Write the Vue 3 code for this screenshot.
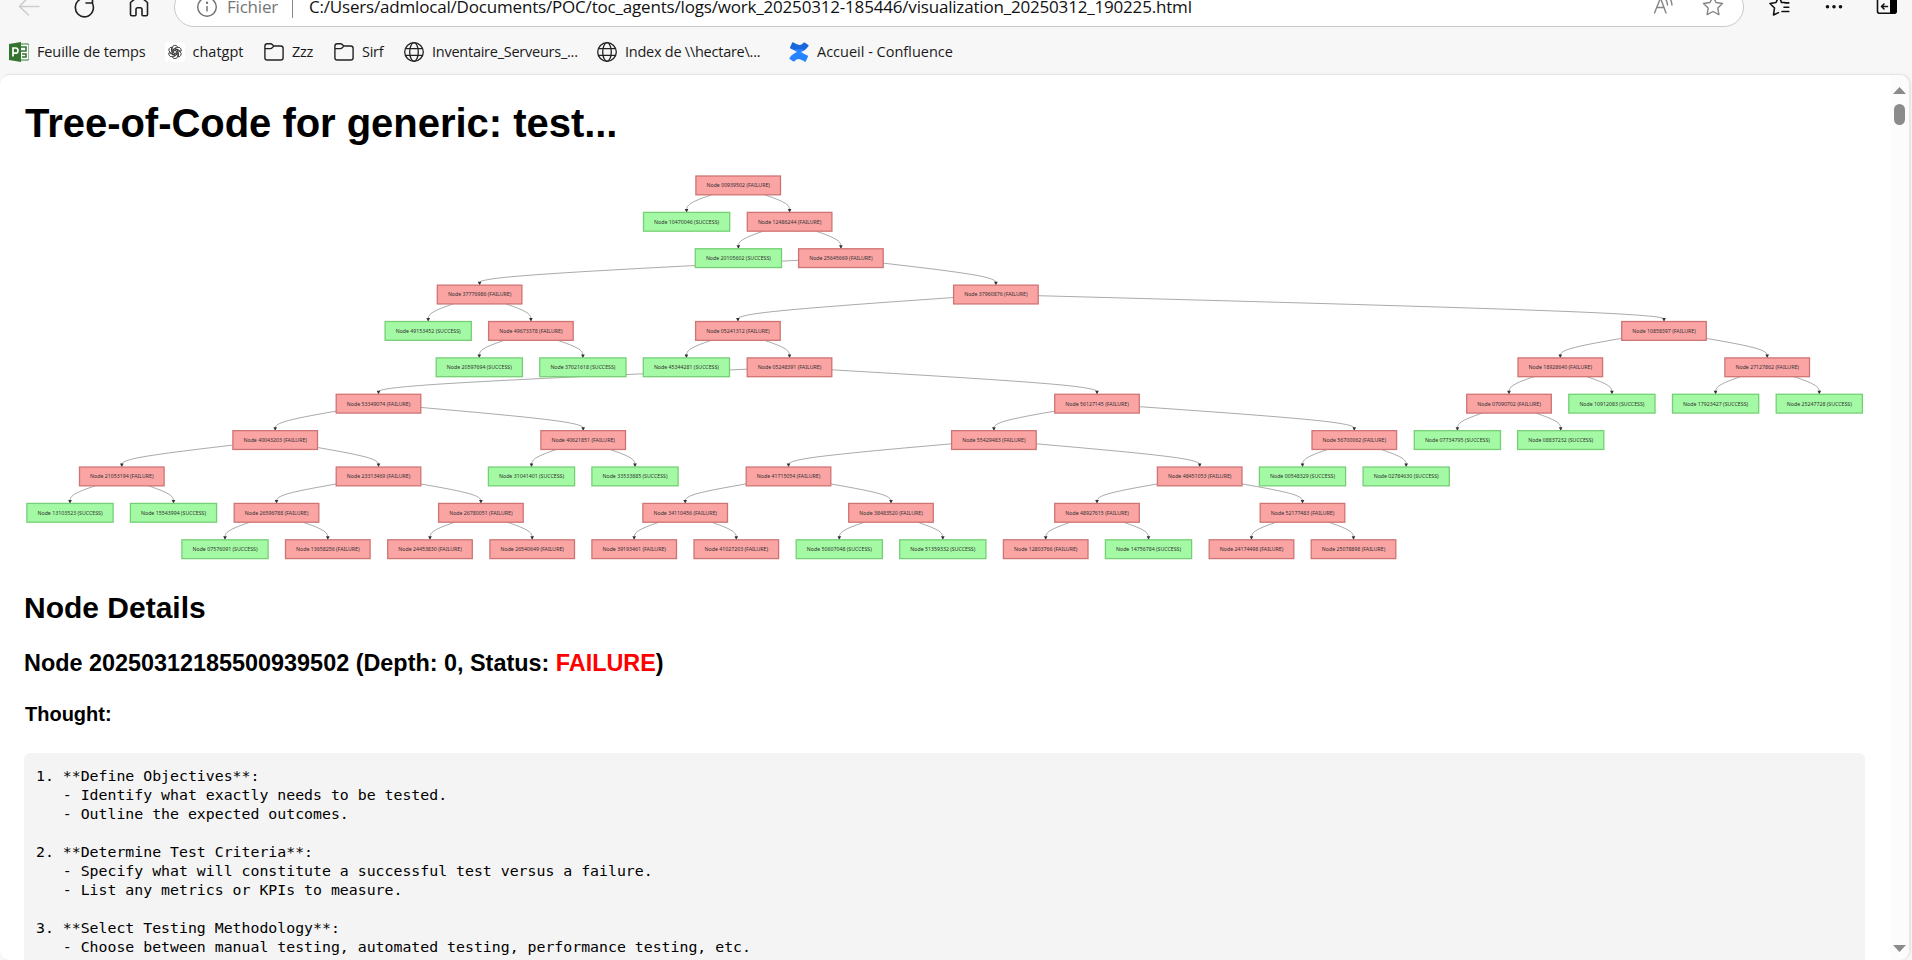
<script setup>
const ROW_TOP = 185.4
const ROW_PITCH = 36.38
const HALF_H = 9.4

// id, row, centre x, parent id; a trailing "S" marks a successful node
const source = `
00939502 0 738.2 - F
10470046 1 686.6 00939502 S
12486244 1 789.6 00939502 F
20105602 2 738.4 12486244 S
25645669 2 840.9 12486244 F
37776986 3 479.6 25645669 F
37960876 3 995.9 25645669 F
49153452 4 428.2 37776986 S
49673378 4 530.9 37776986 F
05241312 4 737.9 37960876 F
10858397 4 1664 37960876 F
20597694 5 479.3 49673378 S
37021618 5 582.9 49673378 S
45344281 5 686.4 05241312 S
05248391 5 789.5 05241312 F
18928640 5 1560.3 10858397 F
27127862 5 1767.2 10858397 F
53349074 6 378.5 05248391 F
56127145 6 1097 05248391 F
07090702 6 1509 18928640 F
10912083 6 1611.9 18928640 S
17923427 6 1715.6 27127862 S
25247728 6 1819.3 27127862 S
40043203 7 275.2 53349074 F
40621851 7 583.2 53349074 F
55429483 7 993.9 56127145 F
56700062 7 1354.3 56127145 F
07734795 7 1457.4 07090702 S
08837232 7 1560.7 07090702 S
21053194 8 121.8 40043203 F
23313469 8 378.5 40043203 F
31041401 8 531.5 40621851 S
33533885 8 635 40621851 S
41715054 8 788.5 55429483 F
48451053 8 1199.7 55429483 F
00548329 8 1302.5 56700062 S
02784630 8 1406.2 56700062 S
13103523 9 70 21053194 S
15543994 9 173.5 21053194 S
26596788 9 276.5 23313469 F
26780051 9 480.9 23313469 F
34110456 9 685.2 41715054 F
38483520 9 891 41715054 F
48927615 9 1097 48451053 F
52177483 9 1302.5 48451053 F
07576091 10 225 26596788 S
13658256 10 327.8 26596788 F
24453830 10 430 26780051 F
26540649 10 532.2 26780051 F
39193461 10 634.2 34110456 F
41027203 10 736.3 34110456 F
50607048 10 839.3 38483520 S
51359332 10 942.8 38483520 S
12803766 10 1045.7 48927615 F
14756784 10 1148.5 48927615 S
24174498 10 1251.5 52177483 F
25078898 10 1353.5 52177483 F`

const nodes = source.trim().split('\n').map((line) => {
  const [id, row, x, parent, flag] = line.split(' ')
  const ok = flag === 'S'
  return {
    id,
    parent,
    ok,
    x: Number(x),
    y: ROW_TOP + ROW_PITCH * Number(row),
    half: ok ? 43.1 : 42.3,
    label: `Node ${id} (${ok ? 'SUCCESS' : 'FAILURE'})`,
    textWidth: ok ? 65 : 63.4,
  }
})
const byId = Object.fromEntries(nodes.map((n) => [n.id, n]))

function mix(a, b, wa, wb) {
  const s = wa + wb
  return [(a[0] * wa + b[0] * wb) / s, (a[1] * wa + b[1] * wb) / s]
}
const pt = (p) => p.map((v) => v.toFixed(2)).join(',')

// B-spline through source border, middle of the gap and target top
function edgePath(from, to) {
  const dx = to.x - from.x
  const dy = ROW_PITCH / 2
  const t = Math.min(from.half / Math.abs(dx), HALF_H / dy)
  const a = [from.x + dx * t, from.y + dy * t]
  const b = [to.x, from.y + dy]
  const c = [to.x, to.y - HALF_H - 1]
  const joint = [(a[0] + 4 * b[0] + c[0]) / 6, (a[1] + 4 * b[1] + c[1]) / 6]
  return `M${pt(a)}L${pt(mix(a, b, 5, 1))}C${pt(mix(a, b, 2, 1))} ${pt(mix(a, b, 1, 2))} ${pt(joint)}` +
    `C${pt(mix(b, c, 2, 1))} ${pt(mix(b, c, 1, 2))} ${pt(mix(b, c, 1, 5))}L${pt(c)}`
}
const edges = nodes.filter((n) => byId[n.parent]).map((n) => ({
  id: n.id,
  d: edgePath(byId[n.parent], n),
  tip: `M${n.x - 1.8} ${n.y - HALF_H - 3.5}h3.6l-1.8 3.8z`,
}))

const bookmarks = [
  { icon: 'project', label: 'Feuille de temps' },
  { icon: 'gpt', label: 'chatgpt' },
  { icon: 'folder', label: 'Zzz' },
  { icon: 'folder', label: 'Sirf' },
  { icon: 'globe', label: 'Inventaire_Serveurs_...' },
  { icon: 'globe', label: 'Index de \\\\hectare\\...' },
  { icon: 'confluence', label: 'Accueil - Confluence' },
]

const thought = `1. **Define Objectives**:
   - Identify what exactly needs to be tested.
   - Outline the expected outcomes.

2. **Determine Test Criteria**:
   - Specify what will constitute a successful test versus a failure.
   - List any metrics or KPIs to measure.

3. **Select Testing Methodology**:
   - Choose between manual testing, automated testing, performance testing, etc.`
</script>

<template>
  <div class="window">
    <header class="toolbar">
      <svg class="nav" viewBox="0 0 174 27" fill="none" stroke-width="1.6" stroke-linecap="round" stroke-linejoin="round">
        <path d="M39 6.5H20M28.5 -3L19.5 6.5L28.500 15" stroke="#cdcdcd" />
        <path d="M92.500 3.500A9 9.300 0 1 1 88 -1M86 3h6.500V-3" stroke="#1f1f1f" />
        <path d="M130.500 2.500L139 -4.500L147.500 2.500V14.500Q147.500 15.800 146.200 15.800H143Q142 15.800 142 14.800V9.500Q142 7.800 140.300 7.800H137.700Q136 7.800 136 9.500V14.800Q136 15.800 135 15.800H131.800Q130.500 15.800 130.500 14.500Z" stroke="#1f1f1f" />
      </svg>
      <div class="address">
        <svg class="info" viewBox="0 0 22 22" fill="none" stroke="#6e6e6e" stroke-width="1.4">
          <circle cx="11" cy="11" r="9.300" /><path d="M11 10v5.500" /><circle cx="11" cy="6.700" r=".5" />
        </svg>
        <span class="scheme">Fichier</span>
        <span class="divider"></span>
        <span class="url">C:/Users/admlocal/Documents/POC/toc_agents/logs/work_20250312-185446/visualization_20250312_190225.html</span>
        <svg class="address-icons" viewBox="0 0 72 32" fill="none" stroke="#858585" stroke-width="1.4" stroke-linecap="round" stroke-linejoin="round">
          <path d="M1.500 22L7.500 7L13 22M3.800 16.500H11M10.500 6.500Q14 8 14.500 14M14.500 5.500Q18.500 8 19 14" />
          <path d="M60 5.500l3 6 6.500 1-4.700 4.600 1.100 6.500L60 20.500l-5.900 3.100 1.100-6.500-4.700-4.600 6.500-1z" />
        </svg>
      </div>
      <svg class="tools" viewBox="0 0 168 27" fill="none" stroke="#111" stroke-width="1.6" stroke-linecap="round" stroke-linejoin="round">
        <path d="M41 2.500H37.500L35 -4L32 2.500L26 3.500L30.500 8L29.500 15L34.500 12.600M40 7.200H44.800M38 11.500H44.800M41 2.900H44.800" />
        <g fill="#111" stroke="none"><circle cx="83.500" cy="6.800" r="1.800" /><circle cx="90" cy="6.800" r="1.800" /><circle cx="96.500" cy="6.800" r="1.800" /></g>
        <rect x="133.500" y="-4" width="18.500" height="17.200" rx="2" />
        <path d="M146 -4h5q2 0 2 2V11.500q0 2 -2 2H146z" fill="#000" stroke="none" />
        <path d="M143.500 6.500H137.500M140 4L137.500 6.500L140 9" />
      </svg>
    </header>

    <nav class="bookmarks">
      <div v-for="b in bookmarks" :key="b.label" class="bookmark">
        <svg v-if="b.icon === 'project'" class="glyph" viewBox="0 0 20 20">
          <path d="M10 2h9q1 0 1 1v14q0 1-1 1h-9z" fill="#fff" stroke="#31752f" stroke-width="1" />
          <path d="M12 5h5v4h-5M13 12h4v3h-4" fill="none" stroke="#31752f" stroke-width="1.600" />
          <path d="M0 2L12 0V20L0 18z" fill="#31752f" />
          <path d="M4 14.500V6H6.500Q9 6 9 8.600T6.500 11.200H4" fill="none" stroke="#fff" stroke-width="1.700" />
        </svg>
        <svg v-else-if="b.icon === 'gpt'" class="glyph" viewBox="0 0 20 20">
          <rect width="20" height="20" rx="3" fill="#fff" />
          <g fill="none" stroke="#333" stroke-width=".85">
            <path v-for="a in 6" :key="a" d="M7.300 11.600V6.200Q7.300 3.300 10 3.300Q11.600 3.300 12.500 4.500L8.600 6.900V10.800" :transform="`rotate(${a * 60} 10 10)`" />
          </g>
        </svg>
        <svg v-else-if="b.icon === 'folder'" class="glyph" viewBox="0 0 20 20" fill="none" stroke="#222" stroke-width="1.400" stroke-linejoin="round">
          <path d="M.9 4Q.9 1.700 3.200 1.700H6.600Q7.500 1.700 8.200 2.400L9.800 4H16.800Q19.100 4 19.100 6.300V15.700Q19.100 18 16.800 18H3.200Q.9 18 .9 15.700ZM.9 6.600H6.500Q7.500 6.600 8.200 5.800L9.800 4" />
        </svg>
        <svg v-else-if="b.icon === 'globe'" class="glyph" viewBox="0 0 20 20" fill="none" stroke="#222" stroke-width="1.300">
          <circle cx="10" cy="10" r="9.300" /><ellipse cx="10" cy="10" rx="4.300" ry="9.300" /><path d="M1.500 6.700H18.500M1.500 13.300H18.500" />
        </svg>
        <svg v-else class="glyph" viewBox="0 0 20 20">
          <path d="M1 5.500L3.200 .5Q3.500 0 4.200 .3Q8.500 3 10.500 3Q12.500 3 14.500 .8Q15 .3 15.600 .6L19.300 2.900Q19.900 3.300 19.500 4Q16 9.500 11 9.500Q7 9.500 1.400 6.500Q.8 6.200 1 5.500Z" fill="#1868db" />
          <path d="M19 14.500L16.800 19.500Q16.500 20 15.800 19.700Q11.500 17 9.500 17Q7.500 17 5.500 19.200Q5 19.700 4.400 19.400L.7 17.100Q.1 16.700 .5 16Q4 10.500 9 10.500Q13 10.500 18.600 13.500Q19.200 13.800 19 14.500Z" fill="#2684ff" />
          <path d="M6 8Q10 10 14 12Q10 10 6 12Q10 10 14 8Z" fill="#2684ff" stroke="#2684ff" stroke-width="1.500" />
        </svg>
        <span :class="['label', b.icon]">{{ b.label }}</span>
      </div>
    </nav>

    <div class="page">
      <main class="content">
        <h1>Tree-of-Code for generic: test...</h1>
        <svg class="tree" viewBox="24 160 1841 405">
          <g class="edges">
            <path v-for="e in edges" :key="e.id" class="edge" :d="e.d" />
            <path v-for="e in edges" :key="'t' + e.id" class="tip" :d="e.tip" />
          </g>
          <g v-for="n in nodes" :key="n.id" :class="['node', n.ok ? 'success' : 'failure']">
            <rect :x="n.x - n.half" :y="n.y - HALF_H" :width="n.half * 2" :height="HALF_H * 2" />
            <text :x="n.x" :y="n.y + 1.9" :textLength="n.textWidth" lengthAdjust="spacingAndGlyphs">{{ n.label }}</text>
          </g>
        </svg>
        <h2>Node Details</h2>
        <h3>Node 20250312185500939502 (Depth: 0, Status: <span class="bad">FAILURE</span>)</h3>
        <h4>Thought:</h4>
        <pre>{{ thought }}</pre>
      </main>
      <aside class="scrollbar">
        <svg viewBox="0 0 13 7"><path d="M6.500 0L13 7H0z" /></svg>
        <span class="thumb"></span>
        <svg class="down" viewBox="0 0 13 7"><path d="M6.500 7L0 0H13z" /></svg>
      </aside>
    </div>
  </div>
</template>

<style>
body {
  margin: 0;
  overflow: hidden;
}
</style>

<style scoped>
.window {
  width: 1912px;
  height: 960px;
  overflow: hidden;
  display: flex;
  flex-direction: column;
  background: #f7f7f7;
  font-family: "Open Sans", "Noto Sans", sans-serif;
  color: #1a1a1a;
}
.toolbar {
  height: 27px;
  display: flex;
  flex: none;
  align-items: flex-end;
}
.nav { width: 174px; height: 27px; flex: none; }
.tools { width: 168px; height: 27px; flex: none; }
.address {
  box-sizing: border-box;
  flex: 1;
  height: 40px;
  border: 1px solid #c9c9c9;
  border-radius: 20px;
  background: #fff;
  display: flex;
  align-items: center;
  padding-left: 21px;
  white-space: nowrap;
  font-size: 17px;
  line-height: 18px;
}
.info { width: 22px; height: 22px; flex: none; }
.scheme { width: 65px; margin-left: 9px; padding-bottom: 1px; color: #767676; letter-spacing: -.2px; }
.divider { width: 1px; height: 21px; margin-right: 16px; background: #8a8a8a; }
.url { padding-bottom: 1px; color: #111; letter-spacing: -.185px; }
.address-icons { width: 72px; height: 32px; margin-left: auto; margin-right: 18px; }
.bookmarks {
  height: 46.500px;
  flex: none;
  box-sizing: border-box;
  padding: 3px 0 0 9px;
  display: grid;
  grid-template-columns: 155.5px 99.5px 70px 70px 193px 192px 300px;
}
.bookmark {
  display: flex;
  align-items: center;
  gap: 8px;
  height: 44px;
  font-size: 14.5px;
  white-space: nowrap;
}
.glyph { width: 20px; height: 20px; flex: none; }
.label { padding-bottom: 2px; letter-spacing: -.25px; }
.label.project { letter-spacing: -.13px; }
.label.gpt { letter-spacing: 0; }
.label.confluence { letter-spacing: 0; }
.page {
  flex: 1;
  min-height: 0;
  width: 1910px;
  box-sizing: border-box;
  border: 1px solid #e6e6e6;
  border-left: 0;
  border-bottom: 0;
  border-radius: 10px;
  background: #fff;
  overflow: hidden;
  display: flex;
  box-shadow: 1px 0 2px rgba(0, 0, 0, .08);
}
.content {
  flex: 1;
  min-width: 0;
  padding: 25.500px 25px 0 24px;
  font-family: "Liberation Sans", Arial, sans-serif;
  color: #000;
}
h1, h2, h3, h4, pre { margin: 0; font-weight: bold; }
h1 { padding-left: 1px; font-size: 40px; line-height: 46px; letter-spacing: -.03px; }
.tree { display: block; width: 1841px; height: 405px; margin-top: 14px; }
h2 { font-size: 30px; line-height: 34px; margin-top: 25.600px; }
h3 { font-size: 23.400px; line-height: 27px; margin-top: 25.600px; }
h4 { padding-left: 1px; font-size: 20px; line-height: 23px; margin-top: 25.800px; }
.bad { color: #f00; }
pre {
  margin-top: 27px;
  height: 260px;
  padding: 13.600px 12px 0;
  border-radius: 6px;
  background: #f4f4f4;
  font: 14.850px/19.050px "DejaVu Sans Mono", monospace;
}
.edge { fill: none; stroke: #333; stroke-width: .42px; }
.tip { fill: #333; }
.node rect { stroke-width: 1.300px; }
.failure rect { fill: #faa4a4; stroke: #cf7474; }
.success rect { fill: #a4faa4; stroke: #76cf76; }
.node text {
  font: 6.100px "Noto Sans", sans-serif;
  fill: #333;
  text-anchor: middle;
}
.scrollbar {
  width: 19px;
  flex: none;
  box-sizing: border-box;
  padding: 12px 0 8px;
  background: #fcfcfc;
  display: flex;
  flex-direction: column;
  align-items: center;
}
.scrollbar svg { width: 13px; height: 7px; fill: #8b8b8b; flex: none; }
.thumb { width: 11px; height: 21px; margin-top: 10px; border-radius: 6px; background: #8b8b8b; }
.scrollbar .down { margin-top: auto; }
</style>
